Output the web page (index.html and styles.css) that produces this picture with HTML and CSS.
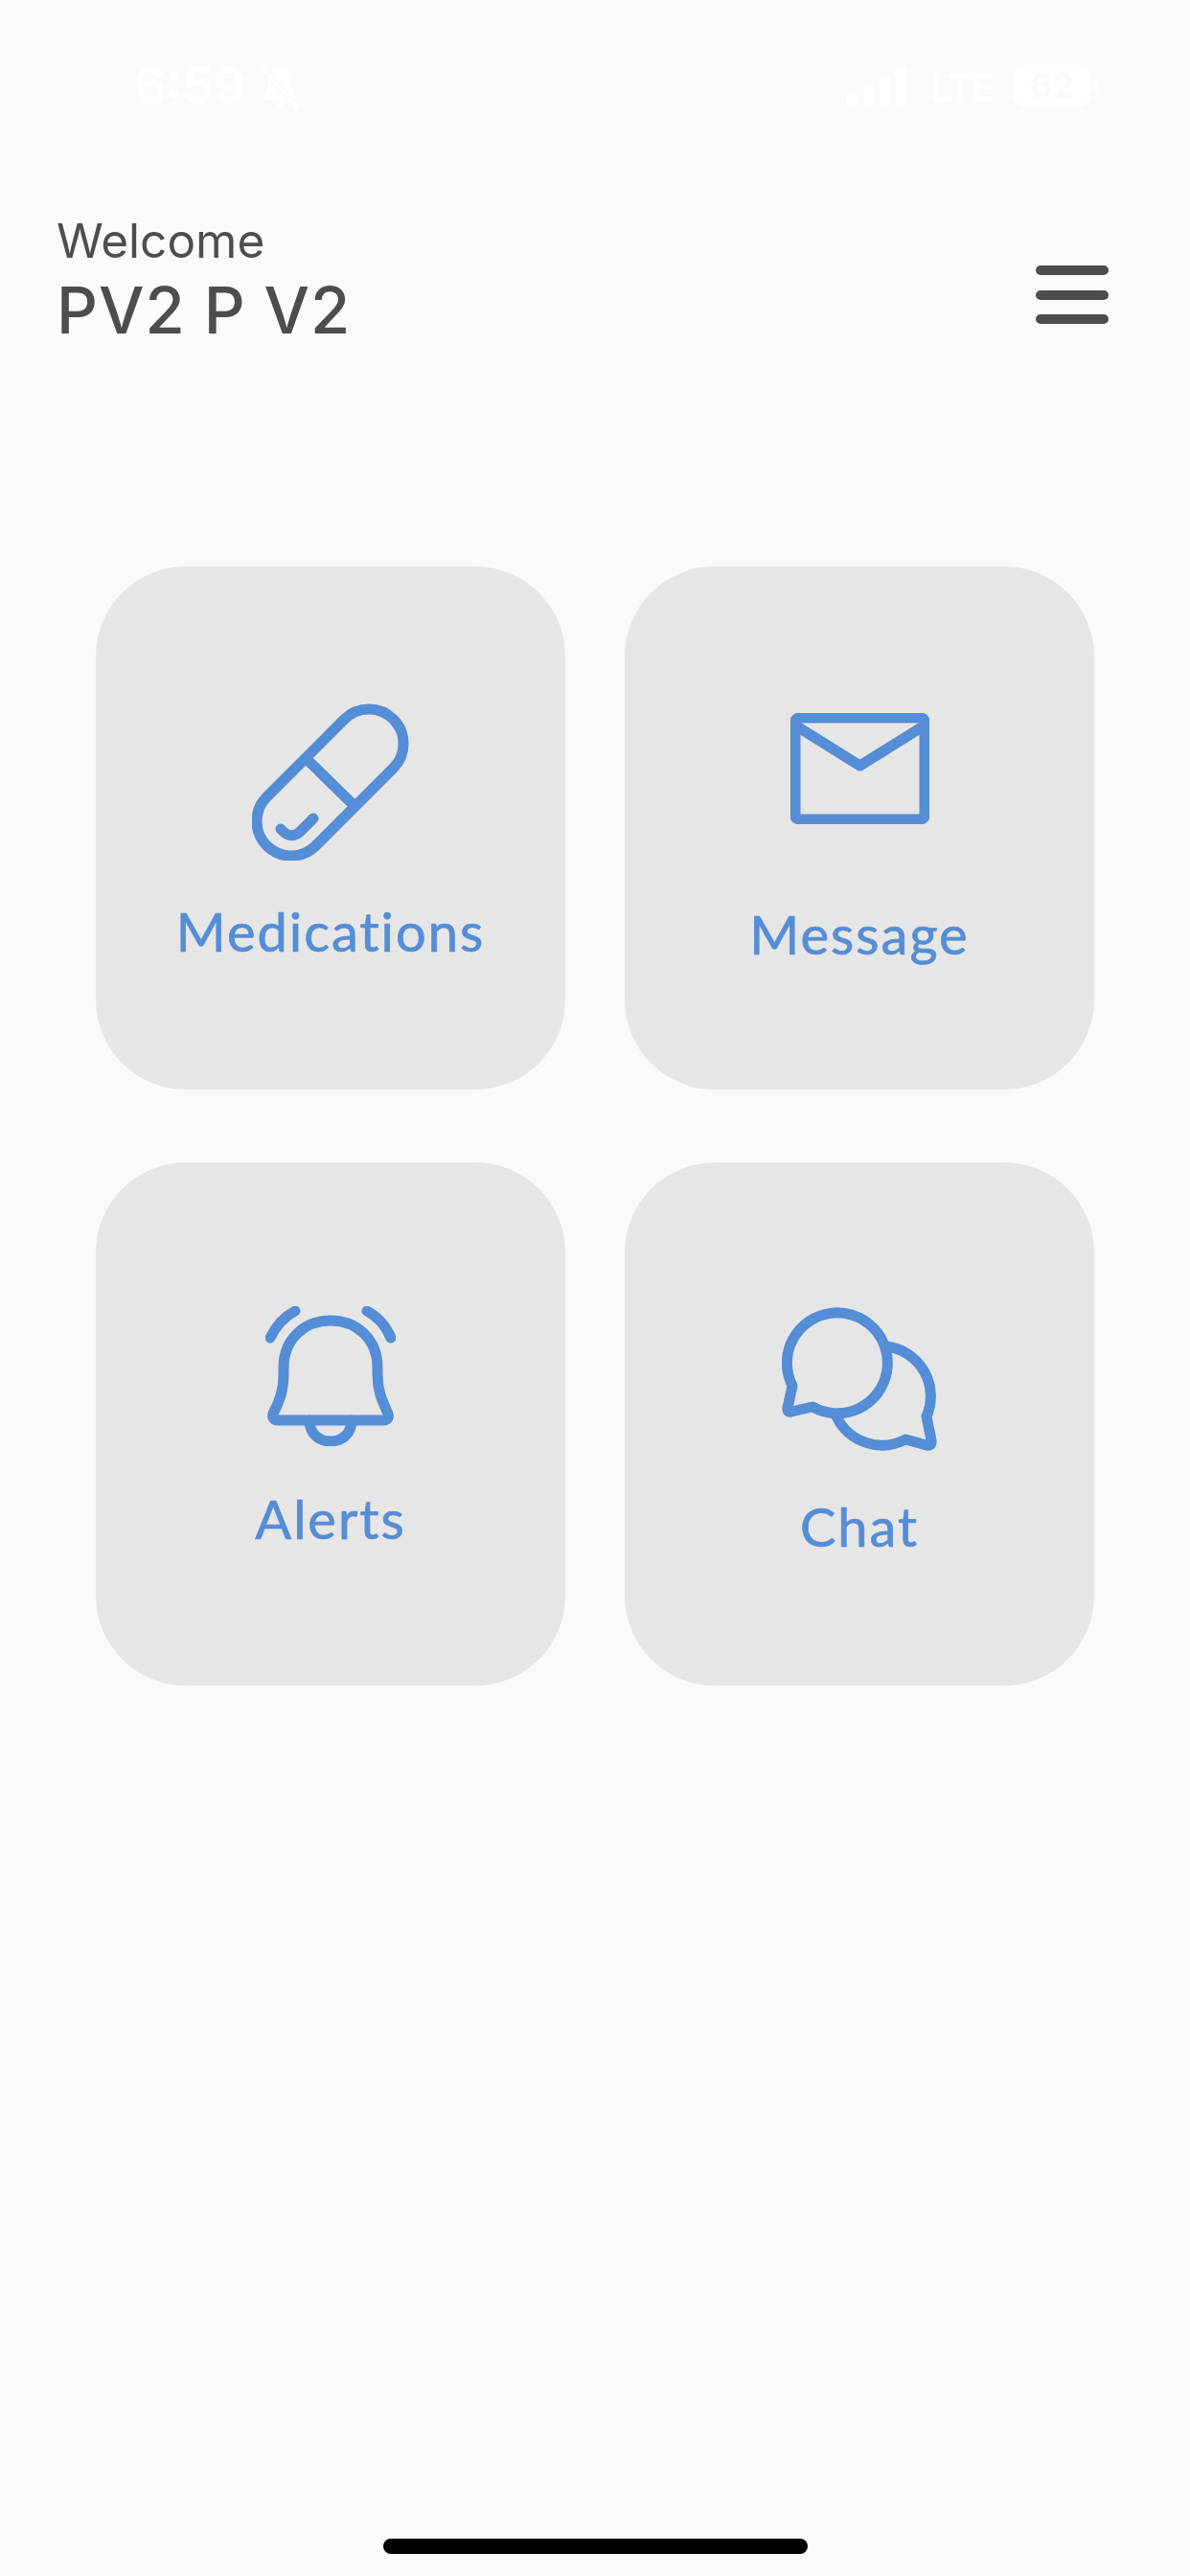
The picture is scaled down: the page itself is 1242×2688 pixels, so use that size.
FILE: index.html
```html
<!DOCTYPE html>
<html lang="en">
<head>
  <meta charset="UTF-8" />
  <meta name="viewport" content="width=device-width, initial-scale=1.0" />
  <title>Home</title>
  <link rel="stylesheet" href="styles.css">
</head>
<body>

  <div class="status-bar">
    <div class="status-left">
      <span class="status-time">6:59</span>
      <svg class="status-bell" viewBox="0 0 42 46" fill="#fff">
        <path d="M22 0c-2.500 0-4 1.800-4.300 3.800C12 5.500 10 10 10 16v6c0 4-2 7-5 10.500-1.500 1.500-.5 3.500 2 3.500h30c2.500 0 3.500-2 2-3.500-3-3.500-5-6.500-5-10.500v-6c0-6-2-10.500-7.700-12.200C26 1.800 24.500 0 22 0z" />
        <path d="M17 38h10c-.5 3-2.500 5-5 5s-4.500-2-5-5z" />
        <path d="M1 0l40 44" stroke="#fafafa" stroke-width="7" fill="none" />
        <path d="M1 0l40 44" stroke="#fff" stroke-width="3" fill="none" />
      </svg>
    </div>
    <div class="status-right">
      <div class="signal">
        <i class="signal-bar bar-1"></i>
        <i class="signal-bar bar-2"></i>
        <i class="signal-bar bar-3"></i>
        <i class="signal-bar bar-4"></i>
      </div>
      <span class="status-lte">LTE</span>
      <div class="battery">
        <span class="battery-body">62</span>
        <i class="battery-cap"></i>
      </div>
    </div>
  </div>

  <header class="top">
    <div class="greeting">
      <span class="welcome">Welcome</span>
      <span class="user-name">PV2 P V2</span>
    </div>
    <div class="menu-btn">
      <span></span>
      <span></span>
      <span></span>
    </div>
  </header>

  <main class="grid">
    <a class="card card-med">
      <svg class="icon icon-med" viewBox="0 0 164 164" fill="none">
        <path d="M96.500 16.500 A36 36 0 0 1 147.500 67.500 L66.500 148.500 A36 36 0 0 1 15.500 97.500 Z" />
        <path d="M57 58 L107 107" />
        <path d="M30 131 Q41 144 52 132 L64 120" />
      </svg>
      <span class="card-label">Medications</span>
    </a>
    <a class="card card-msg">
      <svg class="icon icon-msg" viewBox="0 0 145 116" fill="none">
        <rect x="5" y="5" width="135" height="106" rx="4" />
        <path d="M6 13.500 L72.500 55 L139 13.500" />
      </svg>
      <span class="card-label">Message</span>
    </a>
    <a class="card card-alert">
      <svg class="icon icon-alert" viewBox="0 0 136 146" fill="none">
        <path d="M5 33 Q14 14 31 5" />
        <path d="M106 5 Q123 14 131 33" />
        <path d="M13 119 C8 119 6 115 9 110 C15 99 19 88 19 72 L19 64 C19 35 40 15 68 15 C96 15 117 35 117 64 L117 72 C117 88 122 99 127 110 C130 115 128 119 123 119 Z" />
        <path d="M46 119 C46 133 56 141 68 141 C80 141 90 133 90 119" />
      </svg>
      <span class="card-label">Alerts</span>
    </a>
    <a class="card card-chat">
      <svg class="icon icon-chat" viewBox="0 0 162 151" fill="none">
        <path d="M11 83 L6 106 Q5 111 10 110 L32 105 A52.500 52.500 0 1 0 11 83 Z" />
        <path d="M110 42 A52.500 52.500 0 0 1 151 115 L156 140 Q157 146 151 145 L129 139 A52.500 52.500 0 0 1 57 115" />
      </svg>
      <span class="card-label">Chat</span>
    </a>
  </main>

  <div class="home-bar"></div>

</body>
</html>
```

FILE: styles.css
```css
* {
  box-sizing: border-box;
}

html, body {
  margin: 0;
  height: 100%;
}

body {
  width: 1242px;
  height: 2688px;
  background-color: #fafafa;
  font-family: Inter, "Liberation Sans", sans-serif;
  display: flex;
  flex-direction: column;
}

.status-bar {
  height: 221px;
  padding: 68px 96px 0 140px;
  display: flex;
  justify-content: space-between;
  align-items: flex-start;
  color: #fff;
}

.status-left {
  display: flex;
  align-items: flex-start;
  gap: 14px;
}

.status-time {
  font-size: 52px;
  font-weight: 600;
  line-height: 44px;
}

.status-bell {
  width: 42px;
  height: 46px;
}

.status-right {
  display: flex;
  align-items: flex-start;
  gap: 26px;
}

.signal {
  display: flex;
  align-items: flex-end;
  gap: 6px;
  height: 41px;
  margin-top: 2px;
}

.signal-bar {
  width: 11px;
  background-color: #fff;
  border-radius: 3px;
}

.bar-1 { height: 14px; }
.bar-2 { height: 22px; }
.bar-3 { height: 31px; }
.bar-4 { height: 40px; }

.status-lte {
  width: 60px;
  font-size: 40px;
  font-weight: 600;
  line-height: 44px;
  letter-spacing: -2px;
  margin-top: 2px;
}

.battery {
  display: flex;
  align-items: center;
  gap: 4px;
}

.battery-body {
  width: 80px;
  height: 43px;
  border-radius: 13px;
  background-color: #fff;
  color: #fafafa;
  font-size: 36px;
  font-weight: 700;
  line-height: 43px;
  text-align: center;
}

.battery-cap {
  width: 4px;
  height: 14px;
  border-radius: 0 3px 3px 0;
  background-color: #fff;
}

.top {
  padding: 0 85px 0 59px;
  display: flex;
  justify-content: space-between;
  align-items: flex-end;
  color: #4d4d4d;
}

.greeting {
  display: flex;
  flex-direction: column;
}

.welcome {
  font-size: 49.500px;
  line-height: 60px;
}

.user-name {
  font-size: 67px;
  font-weight: 500;
  line-height: 85px;
  letter-spacing: 1px;
}

.menu-btn {
  width: 76px;
  display: flex;
  flex-direction: column;
  gap: 15.500px;
  margin-bottom: 28px;
}

.menu-btn span {
  height: 10px;
  border-radius: 5px;
  background-color: #4d4d4d;
}

.grid {
  margin-top: 225px;
  padding-left: 100px;
  display: grid;
  grid-template-columns: 490px 490px;
  grid-auto-rows: 546px;
  column-gap: 62px;
  row-gap: 76px;
}

.card {
  background-color: #e6e6e6;
  border-radius: 94px;
  display: flex;
  flex-direction: column;
  align-items: center;
  color: #558dd6;
}

.card-label {
  font-family: Lato, "Noto Sans", sans-serif;
  font-size: 56px;
  line-height: 68px;
  letter-spacing: 2px;
  -webkit-text-stroke: 0.700px #558dd6;
}

.icon {
  stroke: #558dd6;
  stroke-width: 11;
  stroke-linecap: round;
  stroke-linejoin: round;
}

.card-med { padding-top: 143px; }
.icon-med { width: 164px; height: 164px; margin-bottom: 40px; }

.card-msg { padding-top: 153px; }
.icon-msg { width: 145px; height: 116px; margin-bottom: 81px; }

.card-alert { padding-top: 150px; }
.icon-alert { width: 136px; height: 146px; margin-bottom: 42px; }

.card-chat { padding-top: 150px; }
.icon-chat { width: 162px; height: 151px; margin-bottom: 45px; }

.home-bar {
  width: 443px;
  height: 16px;
  border-radius: 8px;
  background-color: #000;
  margin: auto auto 23px;
}
```
